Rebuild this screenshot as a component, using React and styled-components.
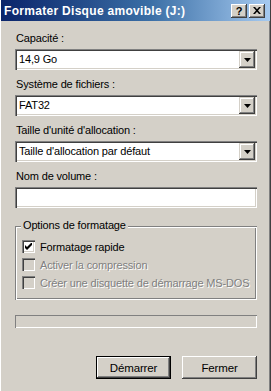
import React from "react";
import styled, { createGlobalStyle } from "styled-components";

const Global = createGlobalStyle`
  html, body { margin: 0; padding: 0; background: #d4d0c8; }
  body { font-family: "Liberation Sans", Arial, sans-serif; font-size: 11px; color: #000; letter-spacing: -0.15px; }
`;

const Window = styled.div`
  width: 271px;
  height: 391px;
  box-sizing: border-box;
  background: #d4d0c8;
  border-left: 1px solid #ffffff;
  border-right: 1px solid #404040;
  box-shadow: inset -1px 0 0 #808080;
  display: flex;
  flex-direction: column;
  overflow: hidden;
`;

const TitleBar = styled.div`
  height: 21px;
  flex: none;
  display: flex;
  align-items: center;
  padding: 0 5px 0 3px;
  background: linear-gradient(to right, #0a246a 0%, #3a6ea5 55%, #a6caf0 100%);
  color: #fff;
  font-weight: bold;
  font-size: 12px;
  letter-spacing: 0.3px;
`;

const Title = styled.span`
  flex: 1;
  white-space: nowrap;
`;

const CaptionButton = styled.div`
  width: 16px;
  height: 14px;
  box-sizing: border-box;
  background: #d4d0c8;
  margin-left: ${(p) => (p.$gap ? "2px" : "0")};
  box-shadow: inset -1px -1px #404040, inset 1px 1px #ffffff, inset -2px -2px #808080;
  display: flex;
  align-items: center;
  justify-content: center;
  color: #000;
  font-size: 11px;
  font-weight: bold;
  letter-spacing: 0;
`;

const Body = styled.div`
  flex: 1;
  display: flex;
  flex-direction: column;
  padding: 11px 13px 0 14px;
`;

const Label = styled.div`
  height: 13px;
  line-height: 13px;
  margin-bottom: 4px;
  padding-left: 1px;
  white-space: nowrap;
`;

const Field = styled.div`
  height: 21px;
  flex: none;
  box-sizing: border-box;
  background: #fff;
  box-shadow: inset 1px 1px #808080, inset 2px 2px #404040, inset -1px -1px #ffffff, inset -2px -2px #d4d0c8;
  display: flex;
  align-items: center;
  padding: 2px;
  margin-bottom: ${(p) => p.$after || 8}px;
`;

const FieldText = styled.span`
  flex: 1;
  padding-left: 2px;
  line-height: 17px;
  white-space: nowrap;
`;

const ArrowButton = styled.div`
  width: 16px;
  height: 17px;
  box-sizing: border-box;
  background: #d4d0c8;
  box-shadow: inset -1px -1px #404040, inset 1px 1px #d4d0c8, inset -2px -2px #808080, inset 2px 2px #ffffff;
  display: flex;
  align-items: center;
  justify-content: center;
`;

const Combo = ({ value }) => (
  <Field>
    <FieldText>{value}</FieldText>
    <ArrowButton>
      <svg width="7" height="4" viewBox="0 0 7 4">
        <path d="M0 0h7L3.5 4z" fill="#000" />
      </svg>
    </ArrowButton>
  </Field>
);

const GroupBox = styled.div`
  position: relative;
  height: 74px;
  flex: none;
  box-sizing: border-box;
  padding: 14px 0 0 7px;
  box-shadow: inset 1px 1px #808080, inset 2px 2px #ffffff, inset -1px -1px #ffffff, inset -2px -2px #808080;
  display: flex;
  flex-direction: column;
  gap: 5px;
`;

const Legend = styled.div`
  position: absolute;
  top: -7px;
  left: 6px;
  padding: 0 2px;
  height: 13px;
  line-height: 13px;
  background: #d4d0c8;
  white-space: nowrap;
`;

const CheckRow = styled.div`
  display: flex;
  align-items: center;
  height: 13px;
  gap: 5px;
  color: ${(p) => (p.$disabled ? "#808080" : "#000")};
  text-shadow: ${(p) => (p.$disabled ? "1px 1px 0 #ffffff" : "none")};
  white-space: nowrap;
`;

const Box = styled.div`
  width: 13px;
  height: 13px;
  box-sizing: border-box;
  background: ${(p) => (p.$disabled ? "#d4d0c8" : "#fff")};
  box-shadow: inset 1px 1px #808080, inset 2px 2px #404040, inset -1px -1px #ffffff, inset -2px -2px #d4d0c8;
  display: flex;
  align-items: center;
  justify-content: center;
  flex: none;
`;

const Check = ({ checked, disabled, children }) => (
  <CheckRow $disabled={disabled}>
    <Box $disabled={disabled}>
      {checked && (
        <svg width="7" height="7" viewBox="0 0 7 7">
          <path d="M0 2v3l2 2 5-5V-1L2 4z" fill="#000" />
        </svg>
      )}
    </Box>
    {children}
  </CheckRow>
);

const Progress = styled.div`
  height: 13px;
  flex: none;
  margin-top: 15px;
  box-shadow: inset 1px 1px #808080, inset -1px -1px #ffffff;
`;

const ButtonRow = styled.div`
  display: flex;
  justify-content: flex-end;
  gap: 11px;
  margin-top: 28px;
`;

const Button = styled.div`
  width: 75px;
  height: 23px;
  box-sizing: border-box;
  display: flex;
  align-items: center;
  justify-content: center;
  background: #d4d0c8;
  font-size: 11.5px;
  border: ${(p) => (p.$default ? "1px solid #000" : "none")};
  box-shadow: ${(p) =>
    p.$default
      ? "inset -1px -1px #404040, inset 1px 1px #ffffff, inset -2px -2px #808080"
      : "inset -1px -1px #404040, inset 1px 1px #ffffff, inset -2px -2px #808080, inset 2px 2px #d4d0c8"};
`;

export default function App() {
  return (
    <>
      <Global />
      <Window>
        <TitleBar>
          <Title>Formater Disque amovible (J:)</Title>
          <CaptionButton>?</CaptionButton>
          <CaptionButton $gap>
            <svg width="8" height="7" viewBox="0 0 8 7">
              <path d="M0 0h2l2 2.2L6 0h2L5 3.5 8 7H6L4 4.8 2 7H0l3-3.5z" fill="#000" />
            </svg>
          </CaptionButton>
        </TitleBar>
        <Body>
          <Label>Capacité :</Label>
          <Combo value="14,9 Go" />
          <Label>Système de fichiers :</Label>
          <Combo value="FAT32" />
          <Label>Taille d'unité d'allocation :</Label>
          <Combo value="Taille d'allocation par défaut" />
          <Label>Nom de volume :</Label>
          <Field $after={18} />
          <GroupBox>
            <Legend>Options de formatage</Legend>
            <Check checked>Formatage rapide</Check>
            <Check disabled>Activer la compression</Check>
            <Check disabled>Créer une disquette de démarrage MS-DOS</Check>
          </GroupBox>
          <Progress />
          <ButtonRow>
            <Button $default>Démarrer</Button>
            <Button>Fermer</Button>
          </ButtonRow>
        </Body>
      </Window>
    </>
  );
}
